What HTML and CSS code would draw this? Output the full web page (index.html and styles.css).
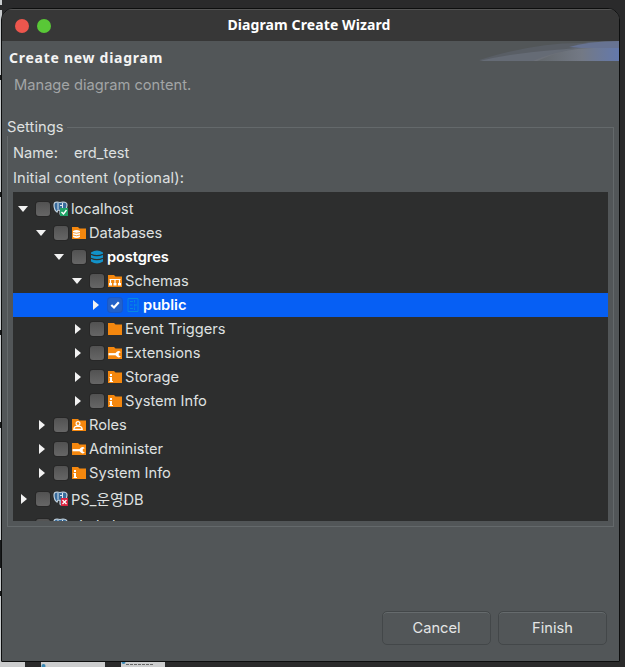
FILE: index.html
```html
<!DOCTYPE html>
<html lang="en">
<head>
<meta charset="utf-8">
<title>Diagram Create Wizard</title>
<link rel="stylesheet" href="styles.css">
</head>
<body>
<svg width="0" height="0" class="defs" aria-hidden="true">
  <symbol id="folder" viewBox="0 0 16 16"><path fill="#f4870e" d="M1 2h6l1.500 1.500H15V14H1z"/></symbol>
  <symbol id="wrench" viewBox="0 0 16 16"><use href="#folder"/><path d="M1.500 9.200H9" stroke="#fff" stroke-width="2.200"/><path d="M13.800 7.200a3 3 0 1 0 0 4l-2-.8V8z" fill="#fff"/></symbol>
  <symbol id="info" viewBox="0 0 16 16"><use href="#folder"/><path fill="#fff" d="M3 5h2v2H3zM2.500 8H5v4h1v1H2.500v-1H3V9h-.5z"/></symbol>
  <symbol id="elephant" viewBox="0 0 16 16"><path fill="#376b9c" stroke="#c3d3df" stroke-width="1.200" d="M1 4Q1 1 4 1l3 .5L10 1q4 0 4 3t-2 5l-2 .5V13q-2 2-3 0V9.500L5 9l-1 2Q1 9 1 4z"/><path d="M5 2v6M9.500 2v6M7 4.500h2" stroke="#dce7ee" fill="none"/></symbol>
</svg>
<div class="edge"></div>
<div class="strip">
  <i></i>
  <i><svg width="64" height="6"><path d="M6 .5h42" stroke="#555" stroke-dasharray="3 1"/><circle cx="2.500" cy="5" r="2" fill="#3887b3"/></svg></i>
  <i><svg width="44" height="6"><path d="M5 3.500h28" stroke="#666" stroke-dasharray="3 1"/><circle cx="2.500" cy="1" r="2" fill="#3887b3"/></svg></i>
</div>
<main class="window">
  <header class="titlebar"><span class="dots"><i class="red"></i><i class="green"></i></span><h1>Diagram Create Wizard</h1></header>
  <section class="banner">
    <div><h2>Create new diagram</h2><p>Manage diagram content.</p></div>
    <svg width="140" height="20" viewBox="0 0 140 20">
      <defs><linearGradient id="g"><stop offset="0" stop-color="#62676b"/><stop offset=".55" stop-color="#737985"/><stop offset="1" stop-color="#6479ac"/></linearGradient></defs>
      <path fill="#595e65" d="M0 19Q55 2 100 2L140 0v20z"/>
      <path fill="#656b75" d="M0 20Q35 12 75 9T140 0v20z"/>
      <path fill="#6c7078" d="M54 20Q75 10 110 7h30v13z"/>
      <path fill="url(#g)" d="M58 20Q85 7 115 7h25v13z"/>
      <path fill="#677392" d="M90 6Q110 0 140 0v7h-38z"/>
    </svg>
  </section>
  <fieldset class="settings">
    <legend>Settings</legend>
    <div class="name"><span class="key">Name:</span><span class="value">erd_test</span></div>
    <div class="initial">Initial content (optional):</div>
    <ul class="tree">
      <li class="row l0 open"><b class="arrow"></b><b class="check"></b><svg class="icon"><use href="#elephant"/><path fill="#20a267" d="M7 7h8v8H7z"/><path d="M8.500 11l2 2 3-4" fill="none" stroke="#fff" stroke-width="1.400"/></svg><span>localhost</span></li>
      <li class="row l1 open"><b class="arrow"></b><b class="check"></b><svg class="icon"><use href="#folder"/><path fill="#fff" d="M2 6q3.500-2 7 0v6q-3.500 2-7 0z"/><path d="M2 7.500q3.500 1.500 7 0M2 10q3.500 1.500 7 0" stroke="#f4870e" stroke-width=".8" fill="none"/></svg><span>Databases</span></li>
      <li class="row l2 open strong"><b class="arrow"></b><b class="check"></b><svg class="icon"><path fill="#1292c9" d="M2 3.500q6-4 12 0v9q-6 4-12 0z"/><path d="M2 5.200q6 3 12 0M2 9.200q6 3 12 0" stroke="#2f3030" stroke-width="1.200" fill="none"/></svg><span>postgres</span></li>
      <li class="row l3 open"><b class="arrow"></b><b class="check"></b><svg class="icon"><use href="#folder"/><path d="M2.500 6.500h11M3.500 6v6M8 6v6M12.500 6v6" fill="none" stroke="#fff" stroke-width="1.200"/><path fill="#fff" d="M2 10h3v2.500H2zM6.500 10h3v2.500h-3zM11 10h3v2.500h-3z"/></svg><span>Schemas</span></li>
      <li class="row l4 strong selected"><b class="arrow"></b><b class="check"><svg viewBox="0 0 14 14"><path d="M3.300 7l2.700 2.500L10.800 4.300" fill="none" stroke="#fff" stroke-width="2.200"/></svg></b><svg class="icon"><path d="M3 1.500h10v13H3zM5 4.500h3M5 8h2.500M5 11.500h3M9.500 3v2.500M9.500 7v2.500M9.500 10.500V13M9.500 8H12" fill="none" stroke="#0788e0"/></svg><span>public</span></li>
      <li class="row l3"><b class="arrow"></b><b class="check"></b><svg class="icon"><use href="#folder"/></svg><span>Event Triggers</span></li>
      <li class="row l3"><b class="arrow"></b><b class="check"></b><svg class="icon"><use href="#wrench"/></svg><span>Extensions</span></li>
      <li class="row l3"><b class="arrow"></b><b class="check"></b><svg class="icon"><use href="#info"/></svg><span>Storage</span></li>
      <li class="row l3"><b class="arrow"></b><b class="check"></b><svg class="icon"><use href="#info"/></svg><span>System Info</span></li>
      <li class="row l1"><b class="arrow"></b><b class="check"></b><svg class="icon"><use href="#folder"/><circle cx="7" cy="6.500" r="1.900" fill="none" stroke="#fff" stroke-width="1.200"/><path d="M2.800 12.400q.2-3 2.700-3h3q2.500 0 2.700 3z" fill="none" stroke="#fff" stroke-width="1.200"/></svg><span>Roles</span></li>
      <li class="row l1"><b class="arrow"></b><b class="check"></b><svg class="icon"><use href="#wrench"/></svg><span>Administer</span></li>
      <li class="row l1"><b class="arrow"></b><b class="check"></b><svg class="icon"><use href="#info"/></svg><span>System Info</span></li>
      <li class="row l0 tall"><b class="arrow"></b><b class="check"></b><svg class="icon"><use href="#elephant"/><path fill="#d9233f" d="M8 7h7v8H8z"/><path d="M9.500 9l4 4m0-4l-4 4" stroke="#fff" stroke-width="1.300"/></svg><span>PS_운영DB</span></li>
      <li class="row l0 last"><b class="arrow"></b><b class="check"></b><svg class="icon"><use href="#elephant"/></svg><span>vital . k</span></li>
    </ul>
  </fieldset>
  <footer><button>Cancel</button><button>Finish</button></footer>
</main>
</body>
</html>
```
FILE: styles.css
```css
* { box-sizing: border-box; }
body {
  margin: 0; width: 625px; height: 667px; overflow: hidden; position: relative;
  padding: 8px 0 0 1px;
  background: #2a2a2b;
  font: 14.67px Inter, "Noto Sans CJK KR", sans-serif; color: #dfe0e0;
}
.defs { position: absolute; }
.edge {
  position: absolute; left: 0; top: 0; width: 2px; height: 667px;
  background: linear-gradient(#c8cbcd 0 5px, #2a2a2b 5px 10px, #c8cbcd 10px 75px, #181a1b 75px 80px, #c8cbcd 80px 192px, #181a1b 192px 197px, #c8cbcd 197px 330px, #181a1b 330px 335px, #c8cbcd 335px 422px, #181a1b 422px 428px, #c8cbcd 428px 540px, #181a1b 540px 568px, #c8cbcd 568px 591px, #181a1b 591px 596px, #c8cbcd 596px);
}
h1, h2, p, ul { margin: 0; padding: 0; }
.window {
  width: 619px; height: 654px; display: flex; flex-direction: column;
  background: #525658; border: 1px solid #0d0e0e; border-radius: 12px 12px 1px 1px; overflow: hidden; position: relative;
}
.titlebar {
  height: 32px; flex: none; background: #373737; border-top: 1px solid #555;
  display: grid; grid-template-columns: 52px 1fr 54px; align-items: center;
}
.dots { display: flex; gap: 8px; padding-left: 13px; }
.dots i { width: 14px; height: 14px; border-radius: 50%; }
.red { background: #ed564d; }
.green { background: #59c837; }
h1 { font: bold 14px/18px "Noto Sans", sans-serif; text-align: center; color: #fff; letter-spacing: .1px; padding-bottom: 2px; margin-left: -1px; }
.banner { height: 78px; flex: none; display: flex; justify-content: space-between; }
h2 { font: bold 14px/18px "Noto Sans", sans-serif; color: #f4f4f4; padding: 8px 0 0 7px; letter-spacing: .73px; }
p { color: #a2a5a6; padding: 9px 0 0 12px; line-height: 18px; }
.settings {
  margin: -1px 5px 0; height: 409px; flex: none; min-width: 0;
  border: 1px solid #64696b; padding: 0 5px;
}
legend { padding: 0 3px 0 0; margin-left: -6px; line-height: 18px; letter-spacing: .05px; }
.name { height: 25px; line-height: 25px; margin-top: 5px; display: flex; }
.key { width: 61px; }
.initial { height: 26px; line-height: 25px; letter-spacing: .15px; }
.tree { height: 329px; overflow: hidden; background: #2d2e2e; padding-top: 5px; list-style: none; }
.row { height: 24px; display: flex; align-items: center; white-space: pre; padding-left: 5px; }
.l1 { padding-left: 23px; }
.l2 { padding-left: 41px; }
.l3 { padding-left: 59px; }
.l4 { padding-left: 77px; }
.arrow { width: 10px; margin-right: 8px; display: flex; justify-content: center; }
.arrow::before { content: ""; border: solid transparent; border-width: 5px 0 5px 6px; border-left-color: #f2f2f2; margin-left: 1px; }
.open .arrow::before { border: solid transparent; border-width: 6px 5px 0; border-top-color: #f2f2f2; margin: 0; }
.check { width: 14px; height: 14px; border-radius: 3px; background: linear-gradient(#525252, #666); box-shadow: 0 0 0 1px #272727; margin-right: 3px; }
.check svg { display: block; }
.icon { width: 16px; height: 16px; margin-right: 2px; flex: none; }
.strong { font-weight: 600; color: #fff; letter-spacing: -.1px; }
.selected { background: #065ff4; letter-spacing: 0; }
.selected .check { background: #2361c8; box-shadow: 0 0 0 1px #1958c9; }
.tall { height: 29px; padding-bottom: 2px; }
.last { height: 24px; }
footer { margin-top: auto; padding: 0 12px 16px; display: flex; justify-content: flex-end; gap: 7px; }
button {
  width: 109px; height: 34px; border: 1px solid #434749; border-radius: 5px; background: #525658;
  box-shadow: inset 0 1px #666b6d; color: #e4e5e5; font: inherit; padding: 0 0 1px;
}
.strip { position: absolute; left: 0; right: 0; bottom: 0; height: 6px; display: grid; grid-template-columns: 25px 64px 44px; column-gap: 16px; }
.strip i { background: #cccdce; overflow: hidden; }
.strip svg { display: block; }
```
